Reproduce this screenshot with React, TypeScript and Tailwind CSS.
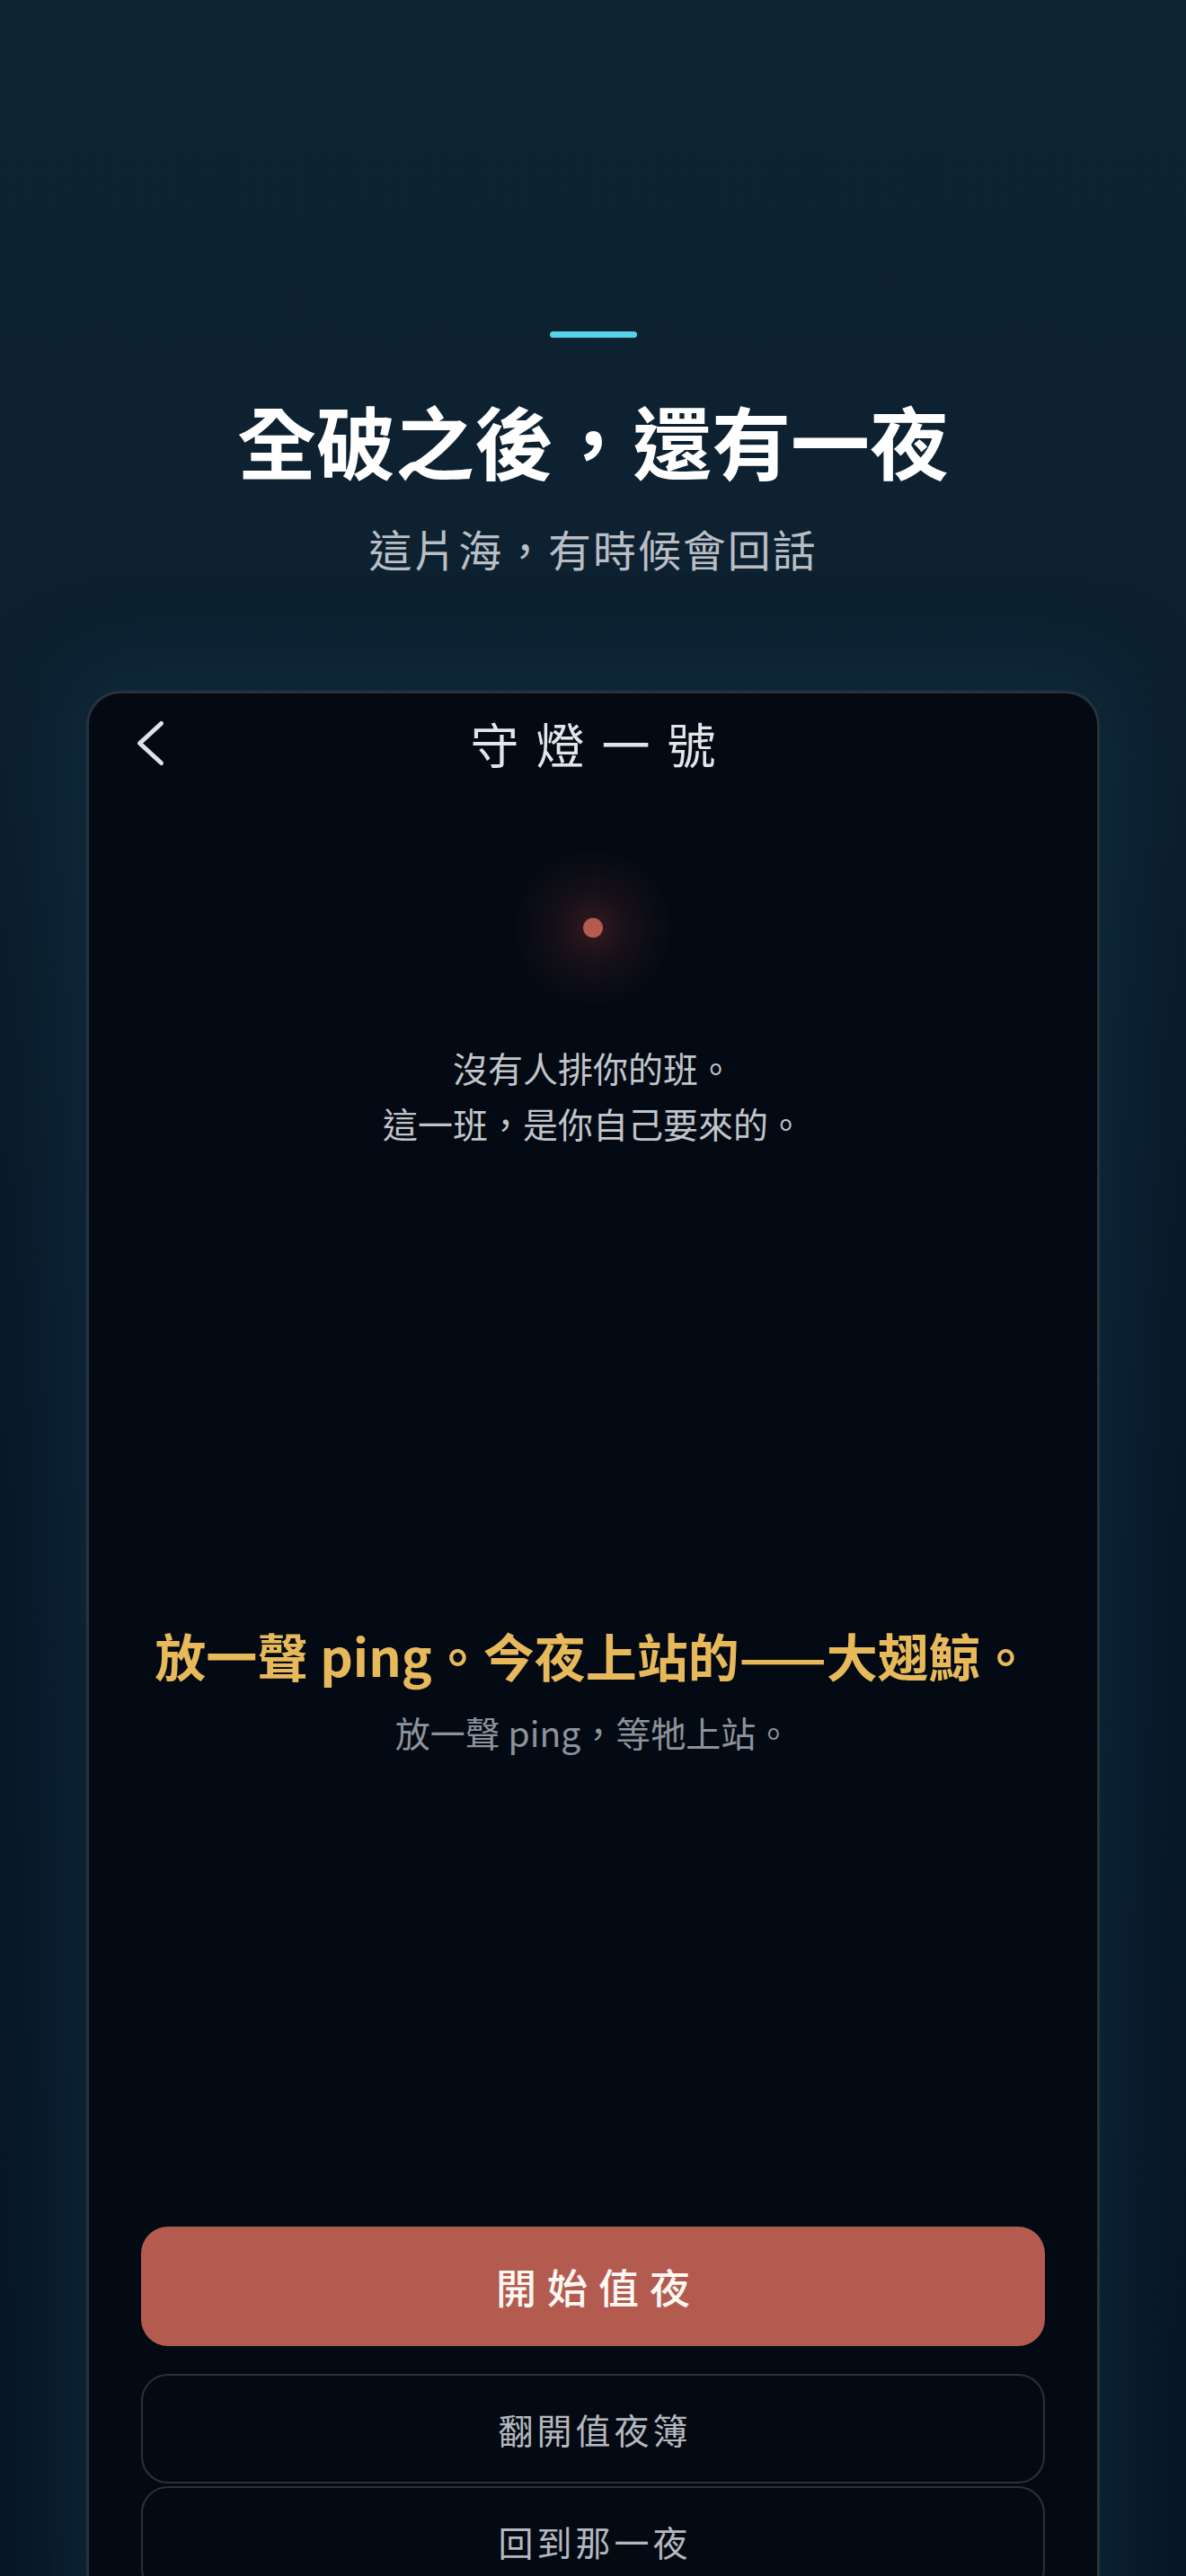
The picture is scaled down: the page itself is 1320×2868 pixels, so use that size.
import React from "react";

export default function App() {
  return (
    <div className="h-[2868px] w-full overflow-hidden bg-[linear-gradient(180deg,#0e2332_0%,#0d2130_22%,#0a1c2b_40%,#081828_60%,#071624_100%)] font-['Noto_Sans_CJK_TC','Noto_Sans',sans-serif]">
      <div className="flex flex-col items-center pt-[369px]">
        <div className="h-[7px] w-[97px] rounded-full bg-[#56d3ea]" />
        <h1 className="mt-[69px] text-[88px] font-bold leading-[88px] text-white">
          全破之後，還有一夜
        </h1>
        <p className="mt-[53px] text-[48px] leading-[48px] tracking-[0.04em] text-[#b9bec5]">
          這片海，有時候會回話
        </p>
      </div>

      <div className="mx-[96px] mt-[135px] h-[2400px] rounded-t-[38px] border-[3px] border-b-0 border-[#29313b] bg-[#030a14] shadow-[0_0_90px_24px_rgba(18,52,72,0.55)]">
        <div className="grid h-[112px] grid-cols-[1fr_auto_1fr] items-center">
          <div className="pl-[51px]">
            <svg width="40" height="60" viewBox="0 0 40 60" fill="none">
              <path
                d="M29.5 7.5 L5.5 29.5 L29.5 51.5"
                stroke="#dfe3e8"
                strokeWidth="5"
                strokeLinecap="round"
                strokeLinejoin="round"
              />
            </svg>
          </div>
          <div className="pl-[19px] text-[54px] font-normal leading-[54px] tracking-[19px] text-[#e3e5e8]">
            守燈一號
          </div>
          <div />
        </div>

        <div className="mx-auto mt-[59px] flex h-[180px] w-[180px] items-center justify-center rounded-full bg-[radial-gradient(circle_closest-side,rgba(150,58,52,0.32)_0%,rgba(120,45,42,0.16)_45%,rgba(3,10,20,0)_100%)]">
          <div className="h-[22px] w-[22px] rounded-full bg-[#b45a50]" />
        </div>

        <div className="mt-[34px] text-center text-[39px] leading-[62px] text-[#c2c5c9]">
          <p>沒有人排你的班。</p>
          <p>這一班，是你自己要來的。</p>
        </div>

        <p className="mt-[524px] text-center text-[57px] font-semibold leading-[74px] text-[#e7b95b]">
          放一聲 ping。今夜上站的——大翅鯨。
        </p>
        <p className="mt-[23px] text-center text-[39px] leading-[52px] text-[#8d939a]">
          放一聲 ping，等牠上站。
        </p>

        <div className="mt-[525px] flex flex-col px-[58px]">
          <button className="flex h-[133px] w-full items-center justify-center rounded-[30px] bg-[#b45b50] pl-[12px] text-[45px] font-medium leading-[45px] tracking-[12px] text-[#fff8f4]">
            開始值夜
          </button>
          <button className="mt-[31px] flex h-[122px] w-full items-center justify-center rounded-[30px] border-2 border-[#2a313b] bg-[#040a14] pl-[4px] text-[39px] leading-[39px] tracking-[4px] text-[#b4b8be]">
            翻開值夜簿
          </button>
          <button className="mt-[3px] flex h-[122px] w-full items-center justify-center rounded-[30px] border-2 border-[#2a313b] bg-[#040a14] pl-[4px] text-[39px] leading-[39px] tracking-[4px] text-[#b4b8be]">
            回到那一夜
          </button>
        </div>
      </div>
    </div>
  );
}
